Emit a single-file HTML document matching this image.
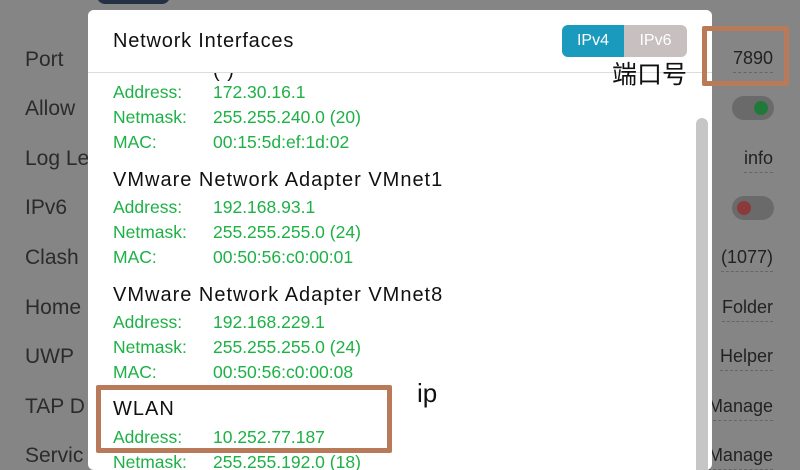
<!DOCTYPE html>
<html><head><style>
body{margin:0;width:800px;height:462px;overflow:hidden;background:#858585;font-family:"Liberation Sans","Noto Sans CJK SC",sans-serif;position:relative}
.a{position:absolute;white-space:nowrap}
.l{left:25px;font-size:21px;color:#2b2b2b}
.r{right:27px;font-size:18px;color:#222;border-bottom:1px dashed #666;padding-bottom:3px}
.tg{position:absolute;left:732px;width:42px;height:24px;border-radius:12px;background:#6a6a6a}
.tg i{position:absolute;top:5px;width:14px;height:14px;border-radius:7px}
#dlg{position:absolute;left:88px;top:10px;width:624px;height:460px;background:#fff;border-radius:6px;overflow:hidden}
.g{color:#1db146;font-size:17.5px}
.t{color:#111;font-size:20px;letter-spacing:1px}
</style></head><body>
<div class="a" style="left:97px;top:-6px;width:73px;height:10px;background:#243044;border-radius:0 0 8px 8px"></div>
<div class="a l" style="top:48px">Port</div>
<div class="a l" style="top:97px">Allow</div>
<div class="a l" style="top:147px">Log Le</div>
<div class="a l" style="top:196px">IPv6</div>
<div class="a l" style="top:246px">Clash</div>
<div class="a l" style="top:296px">Home</div>
<div class="a l" style="top:345px">UWP</div>
<div class="a l" style="top:395px">TAP D</div>
<div class="a l" style="top:444px">Servic</div>
<div class="a r" style="top:48px">7890</div>
<div class="tg" style="top:96px"><i style="left:22px;background:#1f7a3a"></i></div>
<div class="a r" style="top:148px">info</div>
<div class="tg" style="top:196px"><i style="left:5px;background:#8a3a3a"></i></div>
<div class="a r" style="top:247px">(1077)</div>
<div class="a r" style="top:297px">Folder</div>
<div class="a r" style="top:346px">Helper</div>
<div class="a r" style="top:396px">Manage</div>
<div class="a r" style="top:445px">Manage</div>
<div id="dlg">
<div class="a t" style="left:125px;top:50px">(      )</div>
<div class="a" style="left:0;top:0;width:624px;height:62px;background:#fff"></div>
<div class="a" style="left:25px;top:20px;font-size:20px;letter-spacing:0.8px;color:#111">Network Interfaces</div>
<div class="a" style="left:474px;top:15px;width:62px;height:32px;background:#1a9bbd;border-radius:6px 0 0 6px;color:#fff;font-size:16px;line-height:32px;text-align:center">IPv4</div>
<div class="a" style="left:536px;top:15px;width:63px;height:32px;background:#c8c0c0;border-radius:0 6px 6px 0;color:#fff;font-size:16px;line-height:32px;text-align:center">IPv6</div>
<div class="a" style="left:0;top:62px;width:624px;height:1px;background:#ddd"></div>
<div class="a" style="left:608px;top:108px;width:12px;height:360px;background:#c6c6c6;border-radius:6px"></div>
<div class="a g" style="left:25px;top:72px">Address:</div><div class="a g" style="left:125px;top:72px">172.30.16.1</div>
<div class="a g" style="left:25px;top:97px">Netmask:</div><div class="a g" style="left:125px;top:97px">255.255.240.0 (20)</div>
<div class="a g" style="left:25px;top:122px">MAC:</div><div class="a g" style="left:125px;top:122px">00:15:5d:ef:1d:02</div>
<div class="a t" style="left:25px;top:159px">VMware Network Adapter VMnet1</div>
<div class="a g" style="left:25px;top:187px">Address:</div><div class="a g" style="left:125px;top:187px">192.168.93.1</div>
<div class="a g" style="left:25px;top:212px">Netmask:</div><div class="a g" style="left:125px;top:212px">255.255.255.0 (24)</div>
<div class="a g" style="left:25px;top:237px">MAC:</div><div class="a g" style="left:125px;top:237px">00:50:56:c0:00:01</div>
<div class="a t" style="left:25px;top:274px">VMware Network Adapter VMnet8</div>
<div class="a g" style="left:25px;top:302px">Address:</div><div class="a g" style="left:125px;top:302px">192.168.229.1</div>
<div class="a g" style="left:25px;top:327px">Netmask:</div><div class="a g" style="left:125px;top:327px">255.255.255.0 (24)</div>
<div class="a g" style="left:25px;top:352px">MAC:</div><div class="a g" style="left:125px;top:352px">00:50:56:c0:00:08</div>
<div class="a t" style="left:25px;top:388px">WLAN</div>
<div class="a g" style="left:25px;top:417px">Address:</div><div class="a g" style="left:125px;top:417px">10.252.77.187</div>
<div class="a g" style="left:25px;top:442px">Netmask:</div><div class="a g" style="left:125px;top:442px">255.255.192.0 (18)</div>
</div>
<div class="a" style="left:612px;top:55px;font-size:25px;color:#111">端口号</div>
<div class="a" style="left:417px;top:378px;font-size:26px;color:#111">ip</div>
<div class="a" style="left:702px;top:26px;width:77px;height:50px;border:5px solid #b87a58;border-radius:2px"></div>
<div class="a" style="left:96px;top:385px;width:286px;height:58px;border:5px solid #b87a58;border-radius:2px"></div>
</body></html>
